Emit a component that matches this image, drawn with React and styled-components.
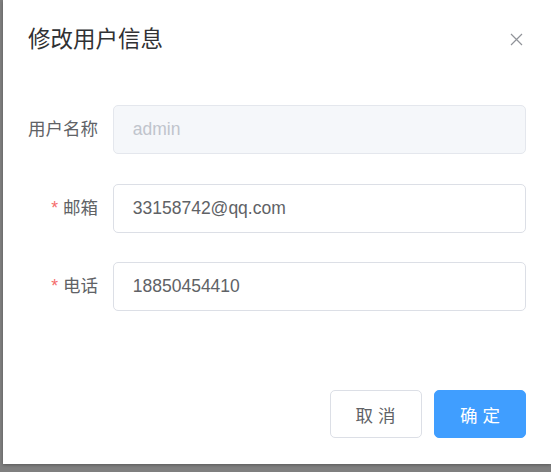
import React from "react";
import styled, { createGlobalStyle } from "styled-components";

const GlobalStyle = createGlobalStyle`
  html, body {
    margin: 0;
    padding: 0;
    background: #7f7f7f;
    font-family: "Liberation Sans", "Noto Sans CJK SC", sans-serif;
  }
`;

const Overlay = styled.div`
  width: 551px;
  height: 472px;
  display: flex;
  align-items: flex-start;
  padding-left: 3px;
  box-sizing: border-box;
  overflow: hidden;
  background: #7f7f7f;
`;

const Dialog = styled.div`
  width: 548px;
  flex-shrink: 0;
  background: #fff;
  box-shadow: 0 1px 3px rgba(0, 0, 0, 0.3);
  box-sizing: border-box;
`;

const Header = styled.div`
  display: flex;
  justify-content: space-between;
  align-items: center;
  padding: 25px 25px 12.5px;
`;

const Title = styled.span`
  font-size: 22.5px;
  line-height: 30px;
  color: #303133;
`;

const CloseButton = styled.button`
  width: 20px;
  height: 20px;
  padding: 0;
  border: none;
  background: transparent;
  display: flex;
  align-items: center;
  justify-content: center;
  cursor: pointer;
  margin-top: -2px;
`;

const Body = styled.div`
  padding: 37.5px 25px;
`;

const FormItem = styled.div`
  display: flex;
  align-items: center;
  margin-bottom: 29.5px;
`;

const Label = styled.label`
  width: 85px;
  flex-shrink: 0;
  padding-right: 15px;
  box-sizing: border-box;
  text-align: right;
  font-size: 17.5px;
  line-height: 49px;
  color: #606266;
  white-space: nowrap;

  ${(p) =>
    p.$required &&
    `
    &::before {
      content: "*";
      color: #f56c6c;
      margin-right: 5px;
    }
  `}
`;

const Input = styled.input`
  flex: 1;
  min-width: 0;
  height: 49px;
  box-sizing: border-box;
  padding: 0 18.75px;
  border: 1px solid ${(p) => (p.disabled ? "#e4e7ed" : "#dcdfe6")};
  border-radius: 5px;
  background: ${(p) => (p.disabled ? "#f5f7fa" : "#fff")};
  color: ${(p) => (p.disabled ? "#c0c4cc" : "#606266")};
  font-family: inherit;
  font-size: 17.5px;
  outline: none;
`;

const Footer = styled.div`
  display: flex;
  justify-content: flex-end;
  gap: 12.5px;
  padding: 12px 25px 26px;
`;

const Button = styled.button`
  width: 92px;
  height: 48px;
  box-sizing: border-box;
  border-radius: 5px;
  font-family: inherit;
  font-size: 17.5px;
  cursor: pointer;
  border: 1px solid ${(p) => (p.$primary ? "#409eff" : "#dcdfe6")};
  background: ${(p) => (p.$primary ? "#409eff" : "#fff")};
  color: ${(p) => (p.$primary ? "#fff" : "#606266")};
`;

export default function App() {
  return (
    <>
      <GlobalStyle />
      <Overlay>
        <Dialog>
          <Header>
            <Title>修改用户信息</Title>
            <CloseButton aria-label="关闭">
              <svg width="13" height="13" viewBox="0 0 13 13">
                <path
                  d="M1 1 L12 12 M12 1 L1 12"
                  stroke="#909399"
                  strokeWidth="1.2"
                  fill="none"
                />
              </svg>
            </CloseButton>
          </Header>
          <Body>
            <FormItem>
              <Label>用户名称</Label>
              <Input disabled defaultValue="admin" />
            </FormItem>
            <FormItem>
              <Label $required>邮箱</Label>
              <Input defaultValue="33158742@qq.com" />
            </FormItem>
            <FormItem>
              <Label $required>电话</Label>
              <Input defaultValue="18850454410" />
            </FormItem>
          </Body>
          <Footer>
            <Button>取 消</Button>
            <Button $primary>确 定</Button>
          </Footer>
        </Dialog>
      </Overlay>
    </>
  );
}
